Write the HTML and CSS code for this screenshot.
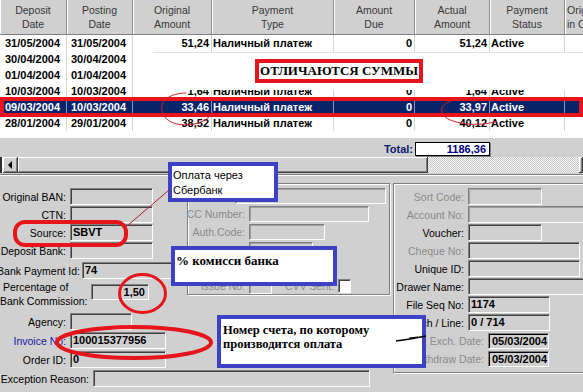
FILE: index.html
```html
<!DOCTYPE html>
<html>
<head>
<meta charset="utf-8">
<link rel="stylesheet" href="styles.css">
</head>
<body>
<div class="screen">
  <div class="grid">
    <div class="ghead cols">
      <div class="hc">Deposit<br>Date</div>
      <div class="hc">Posting<br>Date</div>
      <div class="hc">Original<br>Amount</div>
      <div class="hc">Payment<br>Type</div>
      <div class="hc">Amount<br>Due</div>
      <div class="hc">Actual<br>Amount</div>
      <div class="hc">Payment<br>Status</div>
      <div class="hc hl">Original<br>in Curr</div>
    </div>
    <div class="gbody">
      <div class="row cols">
        <div class="td c0">31/05/2004</div><div class="td c1">31/05/2004</div><div class="td r">51,24</div><div class="td">Наличный платеж</div><div class="td r">0</div><div class="td r">51,24</div><div class="td">Active</div><div class="td"></div>
      </div>
      <div class="row cols">
        <div class="td c0">30/04/2004</div><div class="td c1">30/04/2004</div><div class="td r"></div><div class="td"></div><div class="td r"></div><div class="td r"></div><div class="td"></div><div class="td"></div>
      </div>
      <div class="row cols">
        <div class="td c0">01/04/2004</div><div class="td c1">01/04/2004</div><div class="td r"></div><div class="td"></div><div class="td r"></div><div class="td r"></div><div class="td"></div><div class="td"></div>
      </div>
      <div class="row cols">
        <div class="td c0">10/03/2004</div><div class="td c1">10/03/2004</div><div class="td r">1,64</div><div class="td">Наличный платеж</div><div class="td r">0</div><div class="td r">1,64</div><div class="td">Active</div><div class="td"></div>
      </div>
      <div class="row cols sel">
        <div class="td c0">09/03/2004</div><div class="td c1">10/03/2004</div><div class="td r">33,46</div><div class="td">Наличный платеж</div><div class="td r">0</div><div class="td r">33,97</div><div class="td">Active</div><div class="td"></div>
      </div>
      <div class="row cols">
        <div class="td c0">28/01/2004</div><div class="td c1">29/01/2004</div><div class="td r">38,52</div><div class="td">Наличный платеж</div><div class="td r">0</div><div class="td r">40,12</div><div class="td">Active</div><div class="td"></div>
      </div>
    </div>
  </div>

  <div class="totalbar cols">
    <div class="tot-lbl">Total:</div>
    <div class="tot-box">1186,36</div>
  </div>

  <div class="hscroll">
    <div class="sb-edge"></div>
    <div class="sb-btn"><span class="arrow-l"></span></div>
    <div class="sb-thumb"></div>
    <div class="sb-track"></div>
    <div class="sb-btn sb-end"></div>
  </div>
  <div class="sep"></div>

  <div class="form">
    <div class="colA">
      <div class="topA">
        <div class="leftTop">
          <div class="fr"><span class="lbl lw70">Original BAN:</span><span class="inp iw83"></span></div>
          <div class="fr"><span class="lbl lw70">CTN:</span><span class="inp iw83"></span></div>
          <div class="fr"><span class="lbl lw70">Source:</span><span class="inp iw83">SBVT</span></div>
          <div class="fr"><span class="lbl lw70">Deposit Bank:</span><span class="inp iw83"></span></div>
          <div class="fr bpid"><span class="lbl lw82">Bank Payment Id:</span><span class="inp iw92">74</span></div>
          <div class="fr pct">
            <span class="lbl2"><span class="l1">Percentage of</span><span>Bank Commission:</span></span>
            <span class="inp iw58 r">1,50</span>
          </div>
        </div>
        <div class="grp mid">
          <div class="mr"><span class="lbl dis lw47"></span><span class="inp soft iw151"></span></div>
          <div class="mr"><span class="lbl dis lw61">CC Number:</span><span class="inp soft iw120"></span></div>
          <div class="mr"><span class="lbl dis lw61">Auth.Code:</span><span class="inp soft iw76"></span></div>
          <div class="mr"><span class="lbl dis lw61"></span><span class="inp soft iw64"></span></div>
          <div class="mr"><span class="lbl dis lw61"></span><span class="inp soft iw64"></span></div>
          <div class="mr"><span class="lbl dis lw61">Issue No:</span><span class="inp soft iw23"></span><span class="lbl dis lw66">CVV Sent:</span><span class="chk"></span></div>
        </div>
      </div>
      <div class="botA">
        <div class="br"><span class="lbl lw70">Agency:</span><span class="inp iw62"></span></div>
        <div class="br"><span class="lbl lw70 link">Invoice No:</span><span class="inp iw96">100015377956</span></div>
        <div class="br"><span class="lbl lw70">Order ID:</span><span class="inp iw96">0</span></div>
        <div class="br"><span class="lbl lw93">Exception Reason:</span><span class="inp iw277"></span></div>
      </div>
    </div>
    <div class="grp right">
      <div class="rr"><span class="lbl dis lw74">Sort Code:</span><span class="inp soft iw74"></span></div>
      <div class="rr"><span class="lbl dis lw74">Account No:</span><span class="inp soft iw130"></span></div>
      <div class="rr"><span class="lbl lw74">Voucher:</span><span class="inp iw74"></span></div>
      <div class="rr"><span class="lbl dis lw74">Cheque No:</span><span class="inp iw112"></span></div>
      <div class="rr"><span class="lbl lw74">Unique ID:</span><span class="inp iw112"></span></div>
      <div class="rr"><span class="lbl lw74">Drawer Name:</span><span class="inp iw130"></span></div>
      <div class="rr"><span class="lbl lw74">File Seq No:</span><span class="inp iw82">1174</span></div>
      <div class="rr"><span class="lbl lw74">Batch / Line:</span><span class="inp iw82">0 / 714</span></div>
      <div class="rr dt first"><span class="lbl dis lw94">Exch. Date:</span><span class="inp date iw61">05/03/2004</span></div>
      <div class="rr dt"><span class="lbl dis lw94">Withdraw Date:</span><span class="inp date iw61">05/03/2004</span></div>
    </div>
  </div>

  <div class="cover"></div>
  <div class="note red-note">ОТЛИЧАЮТСЯ СУММЫ</div>
  <div class="note blue b1">Оплата через<br>Сбербанк</div>
  <div class="note blue b2">% комисси банка</div>
  <div class="note blue b3">Номер счета, по которому<br>производится оплата</div>

  <svg class="marks" width="583" height="392" viewBox="0 0 583 392">
    <rect x="2" y="99" width="579" height="16" fill="none" stroke="#e8141c" stroke-width="4"/>
    <path d="M213 111 C206 128 170 130 163 114 C157 100 172 93 186 93" fill="none" stroke="#d0202a" stroke-width="1"/>
    <path d="M497 121 C482 127 447 125 442 113 C439 104 452 98 470 98" fill="none" stroke="#d0202a" stroke-width="1"/>
    <rect x="15" y="222" width="111" height="23" rx="10" fill="none" stroke="#e8141c" stroke-width="4"/>
    <line x1="127" y1="226" x2="169" y2="190" stroke="#b0203a" stroke-width="1"/>
    <ellipse cx="142.5" cy="293.5" rx="23" ry="19" fill="none" stroke="#e8141c" stroke-width="3"/>
    <ellipse cx="134" cy="342.5" rx="77" ry="15.5" fill="none" stroke="#e8141c" stroke-width="4"/>
    <path d="M396 341 L410 339 L426 336" fill="none" stroke="#000" stroke-width="1.5"/>
    <path d="M409 338 L418 337" fill="none" stroke="#000" stroke-width="1"/>
  </svg>
</div>
</body>
</html>
```

FILE: styles.css
```css
* { box-sizing: border-box; }
html, body { margin: 0; padding: 0; }
body {
  width: 583px;
  height: 392px;
  overflow: hidden;
  background: #d0d0d0;
  font-family: "Liberation Sans", Arial, sans-serif;
  font-size: 10.5px;
  color: #000;
}
.screen { position: relative; width: 583px; height: 392px; overflow: hidden; }

/* grid */
.cols {
  display: grid;
  grid-template-columns: 67px 66px 79px 122px 81px 75px 75px 80px;
  width: 645px;
}
.ghead { height: 35px; border-bottom: 1px solid #808080; background: #d0d0d0; }
.hc {
  border-right: 1px solid #8c8c8c;
  box-shadow: inset 1px 0 #fff;
  text-align: center;
  line-height: 14px;
  padding-top: 3px;
  color: #383838;
  white-space: nowrap;
  overflow: hidden;
}
.hc.hl { text-align: left; padding-left: 2px; }
.gbody { height: 103px; background: #fff; overflow: hidden; }
.row { height: 16px; line-height: 16px; font-weight: bold; font-size: 11px; }
.td {
  border-right: 1px solid #d6d6d6;
  padding: 0 2px 0 1px;
  white-space: nowrap;
  overflow: hidden;
}
.td.r { text-align: right; padding-right: 2px; }
.td.c0 { padding-left: 5px; }
.td.c1 { padding-left: 4px; }
.row.sel { background: #0a246a; color: #fff; }
.row.sel .td { border-right-color: #8a94bc; }

/* total */
.totalbar { height: 19px; padding-top: 4px; }
.tot-lbl {
  grid-column: 5;
  text-align: right;
  padding-right: 2px;
  font-weight: bold;
  font-size: 11px;
  color: #0a1a6a;
  line-height: 14px;
}
.tot-box {
  grid-column: 6;
  height: 14px;
  background: #fff;
  border: 1px solid #000;
  box-shadow: 1px 1px #808080;
  text-align: right;
  padding-right: 3px;
  font-weight: bold;
  font-size: 11px;
  color: #000080;
  line-height: 12px;
}

/* scrollbar */
.hscroll { display: flex; height: 16px; }
.sb-edge { width: 3px; background: #303030; border-right: 1px solid #fff; }
.sb-btn, .sb-thumb {
  background: #d0d0d0;
  box-shadow: inset -1px -1px #404040, inset 1px 1px #fff, inset -2px -2px #808080;
}
.sb-btn { width: 15px; display: flex; align-items: center; justify-content: center; }
.sb-end { width: 4px; }
.arrow-l {
  width: 0; height: 0;
  border-top: 4px solid transparent;
  border-bottom: 4px solid transparent;
  border-right: 4px solid #000;
  margin-right: 2px;
}
.sb-thumb { width: 410px; }
.sb-track {
  flex: 1;
  background: repeating-conic-gradient(#c8c8c8 0 25%, #f4f4f4 0 50%) 0 0 / 2px 2px;
}
.sep { height: 2px; margin-top: 1px; border-top: 1px solid #808080; border-bottom: 1px solid #fff; }

/* form */
.form { display: flex; align-items: flex-start; height: 216px; }
.colA { width: 390px; flex: none; }
.topA { display: flex; align-items: flex-start; }
.leftTop { width: 187px; flex: none; padding-top: 12px; }

.fr { display: flex; align-items: center; height: 17px; margin-bottom: 1px; }
.bpid { margin-top: 3px; }
.pct { height: 28px; align-items: flex-start; margin-bottom: 0; }
.pct .inp { margin-top: 4px; height: 16px; }
.lbl2 { width: 91px; flex: none; display: flex; flex-direction: column; line-height: 14px; white-space: nowrap; }
.lbl2 .l1 { padding-left: 3px; }

.lbl {
  display: flex;
  justify-content: flex-end;
  padding-right: 4px;
  white-space: nowrap;
  flex: none;
}
.lbl.dis { color: #8a8a8a; }
.lbl.link { color: #1a1aa0; }
.lw47 { width: 47px; }
.lw61 { width: 61px; }
.lw66 { width: 66px; }
.lw70 { width: 70px; }
.lw74 { width: 74px; }
.lw82 { width: 82px; padding-right: 2px; }
.lw93 { width: 93px; }
.lw94 { width: 94px; }

.inp {
  display: block;
  flex: none;
  height: 17px;
  border: 1px solid;
  border-color: #808080 #fff #fff #808080;
  box-shadow: inset 1px 1px #404040;
  background: #d0d0d0;
  font-weight: bold;
  font-size: 11px;
  line-height: 15px;
  padding-left: 2px;
  white-space: nowrap;
  overflow: hidden;
}
.inp.r { text-align: right; padding-right: 3px; }
.inp.soft { box-shadow: inset 1px 1px #a0a0a0; }
.inp.date {
  box-shadow: inset 1px 1px #000, inset -1px -1px #d0d0d0;
  height: 16px;
  line-height: 14px;
  padding-left: 3px;
}
.iw23 { width: 23px; }
.iw58 { width: 58px; }
.iw61 { width: 61px; }
.iw62 { width: 62px; }
.iw64 { width: 64px; }
.iw74 { width: 74px; }
.iw76 { width: 76px; }
.iw82 { width: 82px; }
.iw83 { width: 83px; }
.iw92 { width: 92px; }
.iw96 { width: 96px; }
.iw112 { width: 112px; }
.iw120 { width: 120px; }
.iw130 { width: 130px; }
.iw151 { width: 151px; }
.iw277 { width: 277px; }

.grp {
  flex: none;
  border: 1px solid #808080;
  box-shadow: inset 1px 1px #fff, 1px 1px #fff;
}
.mid { width: 203px; height: 112px; margin-top: 7px; padding-top: 4px; }
.mr { display: flex; align-items: center; height: 16px; margin-bottom: 2px; }
.mr .inp { height: 16px; line-height: 14px; }
.chk {
  width: 13px; height: 14px;
  background: #fff;
  border: 1px solid;
  border-color: #808080 #fff #fff #808080;
  box-shadow: inset 1px 1px #404040;
}

.botA { padding-top: 5px; }
.br { display: flex; align-items: center; height: 17px; margin-bottom: 2px; }

.right { width: 210px; height: 190px; margin-left: 3px; margin-top: 7px; padding-top: 4px; }
.rr { display: flex; align-items: center; height: 17px; margin-bottom: 1px; }
.rr.first { margin-top: 2px; }
.rr.dt { height: 16px; margin-bottom: 2px; }

/* annotations */
.cover {
  position: absolute;
  left: 153px; top: 52px;
  width: 430px; height: 38px;
  background: #fff;
  border-top: 1px solid #e2e2e2;
}
.note { position: absolute; background: #fff; }
.red-note {
  left: 255px; top: 59px; width: 168px; height: 24px;
  border: 4px solid #e8141c;
  font-family: "Liberation Serif", "Times New Roman", serif;
  font-weight: bold;
  font-size: 13px;
  line-height: 16px;
  text-align: center;
  white-space: nowrap;
}
.blue { border: 4px solid #3d41c4; white-space: nowrap; }
.b1 {
  left: 168px; top: 162px; width: 110px; height: 40px;
  padding: 2px 0 0 1px;
  font-size: 11px;
  line-height: 15px;
}
.b2 {
  left: 171px; top: 246px; width: 166px; height: 40px;
  padding: 4px 0 0 1px;
  font-family: "Liberation Serif", "Times New Roman", serif;
  font-weight: bold;
  font-size: 13px;
  line-height: 14px;
}
.b3 {
  left: 217px; top: 315px; width: 209px; height: 53px;
  padding: 4px 0 0 2px;
  font-family: "Liberation Serif", "Times New Roman", serif;
  font-weight: bold;
  font-size: 12.5px;
  line-height: 14px;
}
.marks { position: absolute; left: 0; top: 0; pointer-events: none; }
```
